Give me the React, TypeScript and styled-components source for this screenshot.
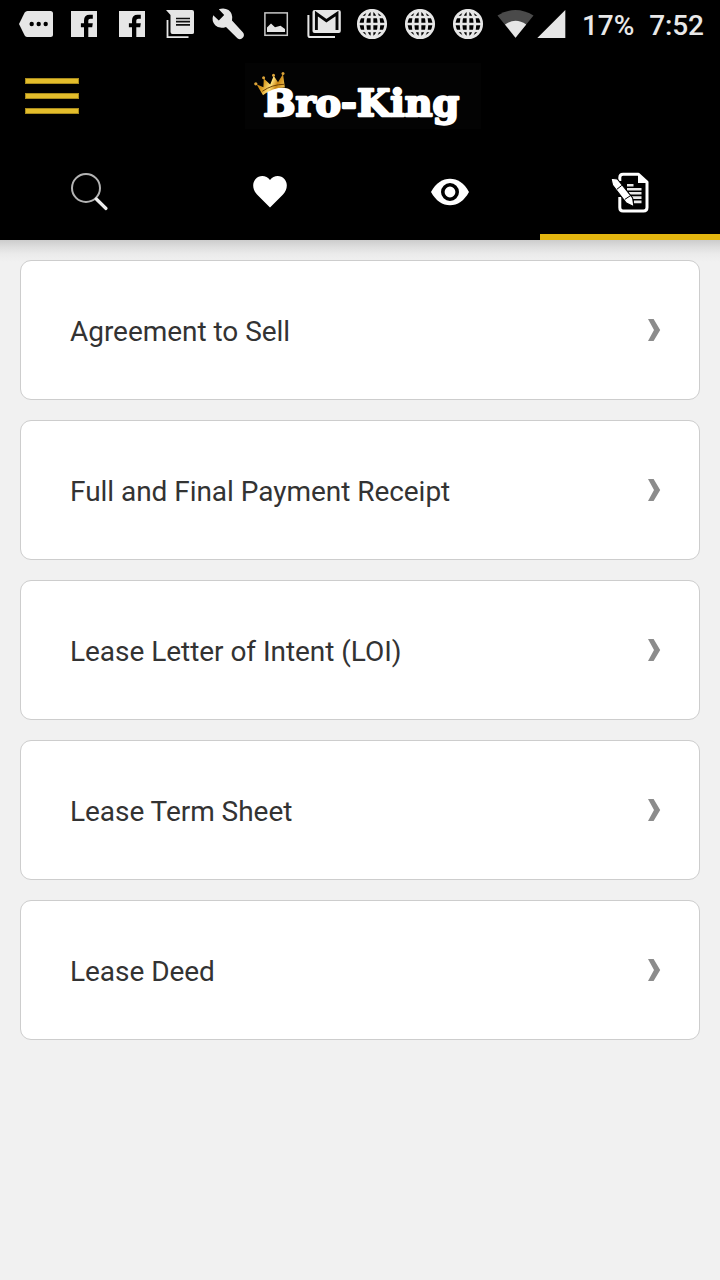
import React from 'react';
import styled, { createGlobalStyle } from 'styled-components';

const GlobalStyle = createGlobalStyle`
  * { box-sizing: border-box; }
  body {
    margin: 0;
    background: #f1f1f1;
    font-family: Roboto, "Liberation Sans", sans-serif;
  }
`;

const Screen = styled.div`
  width: 720px;
  min-height: 1280px;
  display: flex;
  flex-direction: column;
  background: #f1f1f1;
`;

const Header = styled.header`
  height: 240px;
  background: #000;
  display: flex;
  flex-direction: column;
`;

const StatusBar = styled.div`
  height: 48px;
  display: flex;
  align-items: center;
  padding-left: 12px;
  color: #e8e8e8;
`;

const StatusIcon = styled.svg<{ $w?: number }>`
  width: ${(p) => p.$w ?? 48}px;
  height: 48px;
  flex: none;
  display: block;
`;

const StatusText = styled.span<{ $gap: number }>`
  margin-left: ${(p) => p.$gap}px;
  padding-top: 4px;
  font-size: 28px;
  font-weight: 500;
  line-height: 32px;
  letter-spacing: -0.1px;
  white-space: nowrap;
`;

const TitleBar = styled.div`
  height: 96px;
  display: grid;
  grid-template-columns: 245px 236px 1fr;
  align-items: center;
`;

const MenuButton = styled.button`
  width: 54px;
  height: 36px;
  margin-left: 25px;
  padding: 0;
  border: 0;
  background: none;
  display: flex;
  flex-direction: column;
  justify-content: space-between;
`;

const MenuLine = styled.span`
  height: 6px;
  background: #e3bd2b;
  border: 1px solid #a98b1c;
`;

const Logo = styled.svg`
  width: 236px;
  height: 66px;
  display: block;
  background: #030303;
`;

const TabBar = styled.nav`
  height: 96px;
  display: grid;
  grid-template-columns: repeat(4, 1fr);
`;

const Tab = styled.button<{ $active?: boolean }>`
  padding: ${(p) => (p.$active ? '8px 0 0' : '6px 0 0')};
  border: 0;
  border-bottom: ${(p) => (p.$active ? '6px solid #e3b50f' : '0')};
  background: none;
  display: flex;
  align-items: center;
  justify-content: center;
`;

const TabIcon = styled.svg`
  width: 60px;
  height: 60px;
  display: block;
`;

const List = styled.main`
  flex: 1;
  padding: 20px;
  display: flex;
  flex-direction: column;
  gap: 20px;
  background: linear-gradient(#cccccc, #dedede 7px, #ebebeb 14px, #f1f1f1 22px);
`;

const Card = styled.div`
  height: 140px;
  padding: 0 38px 0 49px;
  display: flex;
  align-items: center;
  justify-content: space-between;
  background: #fff;
  border: 1px solid #cdcdcd;
  border-radius: 11px;
  color: #333;
  font-size: 28px;
  line-height: 36px;
`;

const CardLabel = styled.span`
  padding-top: 4px;
  letter-spacing: -0.04px;
  white-space: nowrap;
`;

const Chevron = styled.svg`
  width: 14px;
  height: 24px;
  display: block;
`;

const INK = '#e6e6e6';

const MoreTag = () => (
  <StatusIcon viewBox="0 0 48 48">
    <path fill={INK} d="M15.5 11H38.5Q41 11 41 13.5V34.5Q41 37 38.5 37H15.5Q13.7 37 12.7 35.5L7 24L12.7 12.5Q13.7 11 15.5 11Z" />
    <circle cx="19.7" cy="24" r="2.2" />
    <circle cx="26.7" cy="24" r="2.2" />
    <circle cx="33.7" cy="24" r="2.2" />
  </StatusIcon>
);

const FacebookMark = () => (
  <StatusIcon viewBox="0 0 48 48">
    <rect x="11" y="11" width="26" height="26" fill={INK} />
    <path d="M24 37V27.2H20.9V23.2H24V20.5Q24 14.7 29.6 14.7H32.8V18.7H30.3Q28.3 18.7 28.3 20.6V23.2H32.8L32.2 27.2H28.3V37Z" />
  </StatusIcon>
);

const Newsstand = () => (
  <StatusIcon viewBox="0 0 48 48">
    <path fill={INK} d="M10 10H36Q38 10 38 12V32.5Q38 34 36 34H16.5Q14.5 34 14.5 32V15Z" />
    <path fill="none" stroke={INK} strokeWidth="1.8" d="M11.5 20V37.1H32.5" />
    <path stroke="#111" strokeWidth="1.7" d="M20 18.5H34M20 21.7H34M20 24.9H34" />
  </StatusIcon>
);

const Wrench = () => (
  <StatusIcon viewBox="0 0 48 48">
    <path
      fill={INK}
      d="M14.8 9.3Q20.2 7.4 24.5 10.1Q29.4 13.8 28 20.6L38.8 32.2Q41 34.8 39 37.6Q36.3 40.6 33.4 38.2L22 27Q15.5 29.4 11.2 25.2Q7.3 20.8 9.2 15.2L14.8 20.4L20.2 15Z"
    />
  </StatusIcon>
);

const Picture = () => (
  <StatusIcon viewBox="0 0 48 48">
    <rect x="12.9" y="12.9" width="22.4" height="22.4" fill="none" stroke="#c8c8c8" strokeWidth="1.5" />
    <path fill={INK} d="M15 32V27.5L19 23.5L23 27.2L28.5 25.8L33 29V32Z" />
  </StatusIcon>
);

const GmailStack = () => (
  <StatusIcon viewBox="0 0 48 48">
    <rect x="12.5" y="10" width="28.3" height="23" rx="2" fill={INK} />
    <path fill="none" stroke={INK} strokeWidth="2" d="M8.4 15V35.2Q8.4 37.1 10.3 37.1H35" />
    <path fill="none" stroke="#050505" strokeWidth="2.9" d="M16.4 30V13.5L26.4 20.7L37 13.5V30" />
  </StatusIcon>
);

const Globe = () => (
  <StatusIcon viewBox="0 0 48 48">
    <g fill="none" stroke={INK} strokeWidth="2.7">
      <circle cx="24" cy="24" r="13.7" />
      <ellipse cx="24" cy="24" rx="7" ry="13.7" />
      <path d="M24 10V38M10 24H38M12.5 17H35.5M12.5 31H35.5" />
    </g>
  </StatusIcon>
);

const Wifi = () => (
  <StatusIcon viewBox="0 0 42 48" $w={42}>
    <path fill="#4a4a4a" d="M5.5 15.5Q23.5 4.5 41.5 15.5L23.5 37.8Z" />
    <path fill={INK} d="M13 24.5Q23.5 17 34.2 24.5L23.5 37.8Z" />
  </StatusIcon>
);

const Signal = () => (
  <StatusIcon viewBox="0 0 36 48" $w={36}>
    <path fill={INK} d="M3.3 38L31.3 10V38Z" />
  </StatusIcon>
);

const BrandLogo = () => (
  <Logo viewBox="0 0 236 66" role="img" aria-label="Bro-King">
    <defs>
      <linearGradient id="gold" x1="0" y1="0" x2="1" y2="0.3">
        <stop offset="0" stopColor="#a8690e" />
        <stop offset="0.35" stopColor="#d99a1d" />
        <stop offset="0.6" stopColor="#ffe07a" />
        <stop offset="0.8" stopColor="#c98513" />
        <stop offset="1" stopColor="#e2b040" />
      </linearGradient>
    </defs>
    <text
      x="18.2"
      y="52.6"
      fill="#fff"
      stroke="#fff"
      strokeWidth="2.3"
      strokeLinejoin="round"
      fontFamily='"DejaVu Serif", serif'
      fontWeight="700"
      fontSize="37.5"
      textLength="196"
      lengthAdjust="spacingAndGlyphs"
    >
      Bro-King
    </text>
    <path
      fill="url(#gold)"
      d="M18 32.3L11.5 21.3L18.4 24.3L18.8 15.6L25.2 21.5L28.7 12.8L33 19.3L38 11L39.9 24.6Q27.5 24.4 18 32.3Z"
    />
    <path fill="none" stroke="#704306" strokeWidth="1" d="M17.3 28.3Q27.5 21.3 39 21.3" />
    <g fill="#dca43a">
      <circle cx="10.8" cy="20.8" r="1.6" />
      <circle cx="18.6" cy="14.8" r="1.5" />
      <circle cx="28.5" cy="12.3" r="1.5" />
      <circle cx="38" cy="10.6" r="1.5" />
    </g>
  </Logo>
);

const SearchTab = () => (
  <TabIcon viewBox="0 0 60 60">
    <circle cx="26" cy="23" r="14" fill="none" stroke="#b4b4b4" strokeWidth="2" />
    <path stroke="#ededed" strokeWidth="3.2" strokeLinecap="round" d="M36.3 34L46 43.5" />
  </TabIcon>
);

const HeartTab = () => (
  <TabIcon viewBox="0 0 60 60">
    <path fill="#fff" d="M30 42.5L17 29.5C12.8 25.3 11.8 18.5 15.4 14.2C19.3 9.6 26.4 10 30 15C33.6 10 40.7 9.6 44.6 14.2C48.2 18.5 47.2 25.3 43 29.5Z" />
  </TabIcon>
);

const EyeTab = () => (
  <TabIcon viewBox="0 0 60 60">
    <path fill="#fff" d="M11 27C16 18 22.5 13.8 30 13.8S44 18 49 27C44 36 37.5 40.2 30 40.2S16 36 11 27Z" />
    <circle cx="30" cy="27" r="7.2" fill="#fff" stroke="#000" strokeWidth="3.6" />
  </TabIcon>
);

const DocumentTab = () => (
  <TabIcon viewBox="0 0 60 60">
    <path fill="none" stroke="#fff" strokeWidth="3" strokeLinejoin="round" d="M19.8 18V14.5Q19.8 11.3 23 11.3H38.5L47 19V44.5Q47 48 43.5 48H23Q19.8 48 19.8 44.5V34" />
    <path fill="#fff" d="M38 11V20H47Z" />
    <path stroke="#e8e8e8" strokeWidth="2.6" d="M27 22.3H33.5M27 26.2H41.5M29 30.3H41.5M31 34.6H41.5M34 38.9H41.5" />
    <path fill="#fff" stroke="#000" strokeWidth="1.1" d="M11 15.3L17.3 16L32.6 35L34 43.8L26.3 40L12.5 22Z" />
    <path stroke="#000" strokeWidth="1" d="M17 26.2L21.8 22.4M24.8 36.4L30.6 32.6" />
  </TabIcon>
);

const documents = [
  'Agreement to Sell',
  'Full and Final Payment Receipt',
  'Lease Letter of Intent (LOI)',
  'Lease Term Sheet',
  'Lease Deed',
];

export default function App() {
  return (
    <Screen>
      <GlobalStyle />
      <Header>
        <StatusBar>
          <MoreTag />
          <FacebookMark />
          <FacebookMark />
          <Newsstand />
          <Wrench />
          <Picture />
          <GmailStack />
          <Globe />
          <Globe />
          <Globe />
          <Wifi />
          <Signal />
          <StatusText $gap={12}>17%</StatusText>
          <StatusText $gap={15}>7:52</StatusText>
        </StatusBar>
        <TitleBar>
          <MenuButton aria-label="Menu">
            <MenuLine />
            <MenuLine />
            <MenuLine />
          </MenuButton>
          <BrandLogo />
        </TitleBar>
        <TabBar>
          <Tab aria-label="Search"><SearchTab /></Tab>
          <Tab aria-label="Favourites"><HeartTab /></Tab>
          <Tab aria-label="Viewed"><EyeTab /></Tab>
          <Tab aria-label="Documents" $active><DocumentTab /></Tab>
        </TabBar>
      </Header>
      <List>
        {documents.map((name) => (
          <Card key={name}>
            <CardLabel>{name}</CardLabel>
            <Chevron viewBox="0 0 14 24">
              <path fill="#8c8c8c" d="M1 1H6.6L13.2 12L6.6 23H1L7 12Z" />
            </Chevron>
          </Card>
        ))}
      </List>
    </Screen>
  );
}
